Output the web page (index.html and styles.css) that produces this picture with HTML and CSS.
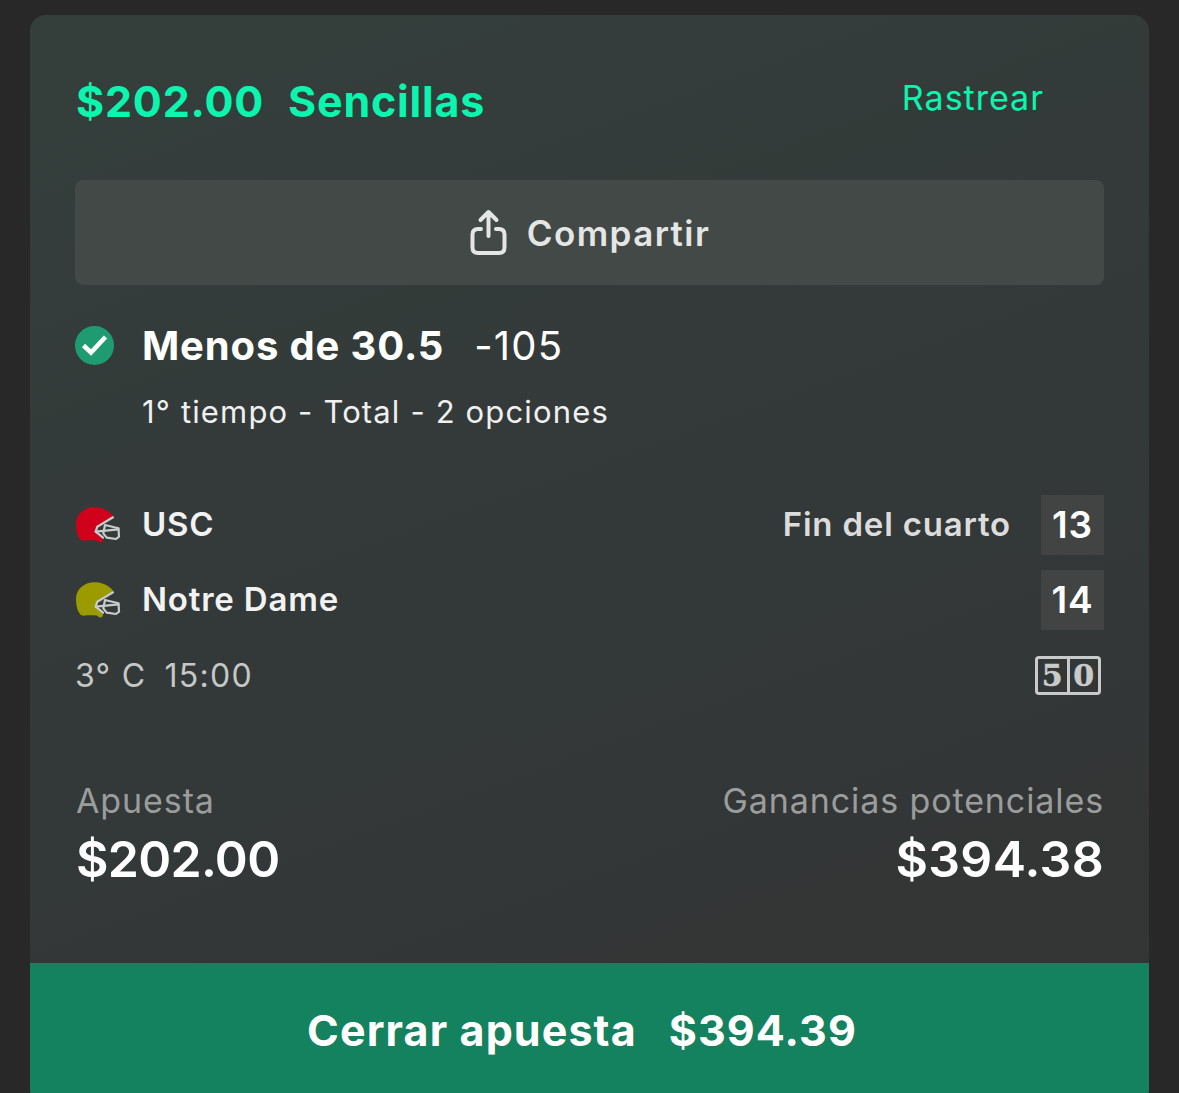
FILE: index.html
```html
<!DOCTYPE html>
<html>
  <head>
  <meta name="viewport" content="width=device-width, initial-scale=1">
  <link rel="stylesheet" href="styles.css">
  </head>
  <body>
    <div class="card">
      <div class="content">
        <div class="top">
          <div class="title"><span>$202.00</span><span>Sencillas</span></div>
          <div class="track">Rastrear</div>
        </div>

        <div class="share">
          <svg class="share-icon" width="38" height="48" viewBox="0 0 38 48" fill="none" stroke="#e4e6e5" stroke-width="4" stroke-linecap="round" stroke-linejoin="round">
            <path d="M12 20H9Q3.500 20 3.500 25.500V38.500Q3.500 44 9 44H30Q35.500 44 35.500 38.500V25.500Q35.500 20 30 20H27"/>
            <path d="M19.500 27V3.500M11.500 11L19.500 3L27.500 11"/>
          </svg>
          <span>Compartir</span>
        </div>

        <div class="pick">
          <svg class="check" width="39" height="39" viewBox="0 0 39 39">
            <circle cx="19.500" cy="19.500" r="19.500" fill="#1f9b72"/>
            <path d="M8.500 19.500L16 26.500L30.500 11" fill="none" stroke="#fff" stroke-width="4.500"/>
          </svg>
          <div class="pick-name">Menos de 30.5</div>
          <div class="pick-odds">-105</div>
        </div>
        <div class="pick-info">1° tiempo - Total - 2 opciones</div>

        <div class="team team-first">
          <svg class="helmet" width="46" height="38" viewBox="0 0 46 38">
            <path d="M38.300 10C33 3.500 26 1 18.300 1.300C8 1.800 1 9 1 18C1 25 2.500 30 5 33C6 34.500 8 35 10 34.500C14 34 18 34 21.700 34.500L24.500 36.500C27 36.800 28.300 35 28 33L20 25.700L22.300 20Z" fill="#d0021b"/>
            <g fill="none" stroke="#c9cccb" stroke-width="2.200" stroke-linejoin="round" stroke-linecap="round">
              <path d="M38 11.300L22.300 20.700L20.700 25.700L28 31.700"/>
              <path d="M20.700 25.700L43.500 23.300"/>
              <path d="M30 19L43.500 22.300L44 30.700L41 33L31.700 31.700L28.300 27.300Z"/>
            </g>
          </svg>
          <div class="team-name">USC</div>
          <div class="period">Fin del cuarto</div>
          <div class="score">13</div>
        </div>
        <div class="team">
          <svg class="helmet" width="46" height="38" viewBox="0 0 46 38">
            <path d="M38.300 10C33 3.500 26 1 18.300 1.300C8 1.800 1 9 1 18C1 25 2.500 30 5 33C6 34.500 8 35 10 34.500C14 34 18 34 21.700 34.500L24.500 36.500C27 36.800 28.300 35 28 33L20 25.700L22.300 20Z" fill="#9b9b00"/>
            <g fill="none" stroke="#c9cccb" stroke-width="2.200" stroke-linejoin="round" stroke-linecap="round">
              <path d="M38 11.300L22.300 20.700L20.700 25.700L28 31.700"/>
              <path d="M20.700 25.700L43.500 23.300"/>
              <path d="M30 19L43.500 22.300L44 30.700L41 33L31.700 31.700L28.300 27.300Z"/>
            </g>
          </svg>
          <div class="team-name">Notre Dame</div>
          <div class="score">14</div>
        </div>

        <div class="clock">
          <div class="clock-text"><span>3° C</span><span>15:00</span></div>
          <div class="yard"><span>5</span><span>0</span></div>
        </div>

        <div class="money">
          <div>
            <div class="money-label">Apuesta</div>
            <div class="money-value">$202.00</div>
          </div>
          <div class="money-right">
            <div class="money-label">Ganancias potenciales</div>
            <div class="money-value">$394.38</div>
          </div>
        </div>
      </div>

      <div class="cashout"><span>Cerrar apuesta</span><span>$394.39</span></div>
    </div>
  </body>
</html>
```

FILE: styles.css
```css
html, body {
  height: 100%;
}
body {
  margin: 0;
  overflow: hidden;
  background-color: #282828;
  font-family: "Inter", "Liberation Sans", sans-serif;
  color: #fff;
}
.card {
  margin: 15px 30px 0 30px;
  height: 1090px;
  border-radius: 16px;
  overflow: hidden;
  background: linear-gradient(160deg, #343f3c 0%, #333838 55%, #343434 100%);
}
.content {
  height: 948px;
  padding: 0 45px;
  box-sizing: border-box;
}
.top {
  height: 165px;
  display: flex;
  justify-content: space-between;
  align-items: flex-start;
}
.title {
  margin: 58px 0 0 1px;
  display: flex;
  gap: 24px;
  font-size: 43px;
  line-height: 56px;
  font-weight: 700;
  letter-spacing: .8px;
  color: #0cf5ae;
}
.track {
  margin: 60px 60px 0 0;
  font-size: 34px;
  line-height: 46px;
  letter-spacing: 1px;
  color: #0cf5ae;
}
.share {
  height: 105px;
  border-radius: 8px;
  background-color: #434947;
  display: flex;
  justify-content: center;
  align-items: center;
  gap: 20px;
  font-size: 35px;
  font-weight: 600;
  letter-spacing: 1.4px;
  color: #e4e6e5;
}
.pick {
  margin-top: 40px;
  display: flex;
  align-items: center;
  height: 40px;
}
.check {
  flex: none;
}
.pick-name {
  margin-left: 28px;
  font-size: 40px;
  font-weight: 700;
  letter-spacing: .85px;
}
.pick-odds {
  margin-left: 30px;
  font-size: 40px;
  letter-spacing: 1.2px;
}
.pick-info {
  margin: 27px 0 0 67px;
  font-size: 31px;
  line-height: 40px;
  letter-spacing: 1.15px;
  color: #f0f0f0;
}
.team {
  margin-top: 15px;
  height: 60px;
  display: flex;
  align-items: center;
  font-size: 33px;
  font-weight: 600;
  letter-spacing: .8px;
}
.team-first {
  margin-top: 63px;
}
.helmet {
  flex: none;
}
.team-name {
  margin-left: 21px;
  flex: 1;
  color: #f2f2f2;
  padding-bottom: 2px;
}
.period {
  margin-right: 30px;
  color: #dcdcdc;
  padding-bottom: 2px;
}
.score {
  width: 63px;
  height: 60px;
  line-height: 59px;
  text-align: center;
  font-size: 37px;
  letter-spacing: .8px;
  background-color: #414443;
}
.clock {
  margin-top: 25px;
  display: flex;
  justify-content: space-between;
  align-items: center;
  font-size: 32px;
  letter-spacing: 1.3px;
  color: #c6c8c7;
}
.clock-text span + span {
  margin-left: 18px;
}
.yard {
  margin: 1px 3px 0 0;
  width: 66px;
  height: 39px;
  box-sizing: border-box;
  border: 3px solid #c9cbca;
  border-radius: 4px;
  display: flex;
  font-family: "DejaVu Serif", serif;
  font-size: 30px;
  font-weight: 700;
  line-height: 33px;
  letter-spacing: 0;
  text-align: center;
  color: #c9cbca;
  -webkit-text-stroke: .5px #c9cbca;
}
.yard span {
  flex: 1;
}
.yard span + span {
  border-left: 3px solid #c9cbca;
}
.money {
  margin-top: 83px;
  padding-left: 1px;
  display: flex;
  justify-content: space-between;
}
.money-right {
  text-align: right;
}
.money-label {
  font-size: 34px;
  line-height: 46px;
  letter-spacing: .9px;
  color: #9b9d9c;
}
.money-value {
  margin-top: 2px;
  font-size: 50px;
  line-height: 66px;
  font-weight: 600;
  letter-spacing: -.7px;
}
.money-right .money-value {
  letter-spacing: .3px;
}
.cashout {
  height: 130px;
  background-color: #15825f;
  display: flex;
  justify-content: center;
  align-items: center;
  gap: 32px;
  font-size: 43px;
  font-weight: 700;
  letter-spacing: 1.1px;
  padding: 3px 15px 0 0;
  box-sizing: border-box;
}
```
